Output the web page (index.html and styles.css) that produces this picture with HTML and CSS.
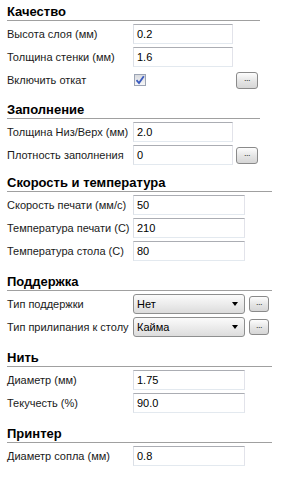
FILE: index.html
```html
<!DOCTYPE html>
<html lang="ru">
<head>
<meta charset="utf-8">
<link rel="stylesheet" href="styles.css">
</head>
<body>
<div class="panel">
  <section class="group narrow first">
    <div class="title">Качество</div>
    <div class="row"><span class="label">Высота слоя (мм)</span><span class="field">0.2</span></div>
    <div class="row"><span class="label">Толщина стенки (мм)</span><span class="field">1.6</span></div>
    <div class="row"><span class="label">Включить откат</span><span class="slot"><span class="check"><svg width="10" height="10" viewBox="0 0 10 10"><path d="M1.5 5.2 L4 8 L8.8 1.2" fill="none" stroke="#3a5bbf" stroke-width="1.8"/></svg></span></span><span class="more">...</span></div>
  </section>
  <section class="group narrow">
    <div class="title">Заполнение</div>
    <div class="row"><span class="label">Толщина Низ/Верх (мм)</span><span class="field">2.0</span></div>
    <div class="row"><span class="label">Плотность заполнения</span><span class="field">0</span><span class="more">...</span></div>
  </section>
  <section class="group wide tight">
    <div class="title">Скорость и температура</div>
    <div class="row"><span class="label">Скорость печати (мм/с)</span><span class="field">50</span></div>
    <div class="row"><span class="label">Температура печати (С)</span><span class="field">210</span></div>
    <div class="row"><span class="label">Температура стола (С)</span><span class="field">80</span></div>
  </section>
  <section class="group wide">
    <div class="title">Поддержка</div>
    <div class="row"><span class="label">Тип поддержки</span><span class="select">Нет<span class="arrow"></span></span><span class="more small">...</span></div>
    <div class="row"><span class="label">Тип прилипания к столу</span><span class="select">Кайма<span class="arrow"></span></span><span class="more small">...</span></div>
  </section>
  <section class="group wide">
    <div class="title">Нить</div>
    <div class="row"><span class="label">Диаметр (мм)</span><span class="field">1.75</span></div>
    <div class="row"><span class="label">Текучесть (%)</span><span class="field">90.0</span></div>
  </section>
  <section class="group wide">
    <div class="title">Принтер</div>
    <div class="row"><span class="label">Диаметр сопла (мм)</span><span class="field">0.8</span></div>
  </section>
</div>
</body>
</html>
```
FILE: styles.css
```css
html, body {
  margin: 0;
  background: #ffffff;
}
.panel {
  padding: 0 0 0 7px;
  font-family: "Liberation Sans", Arial, sans-serif;
  font-size: 11px;
  color: #1a1a1a;
}
.group {
  margin-top: 12px;
}
.group.narrow { width: 253px; margin-top: 11px; }
.group.first { margin-top: 3px; }
.group.tight { margin-top: 9px; }
.group.wide { width: 265px; }
.title {
  font-weight: bold;
  font-size: 13px;
  line-height: 17px;
  height: 17px;
  color: #000;
  border-bottom: 1px solid #a0a0a0;
  margin-bottom: 3px;
}
.row {
  display: flex;
  align-items: center;
  height: 20px;
  margin-top: 3px;
}
.label {
  width: 126px;
  flex: none;
  white-space: nowrap;
}
.field, .slot, .select {
  box-sizing: border-box;
  height: 20px;
  flex: none;
}
.narrow .field, .narrow .slot { width: 100px; }
.wide .field, .wide .select { width: 112px; }
.field {
  border: 1px solid;
  border-color: #abadb3 #e2e3ea #e3e9ef #dbdfe6;
  padding: 0 3px;
  line-height: 18px;
  color: #000;
}
.slot {
  display: flex;
  align-items: center;
  padding-left: 1px;
}
.check {
  box-sizing: border-box;
  width: 12px;
  height: 12px;
  border: 1px solid #9ca4b4;
  background: linear-gradient(#d8dadf, #f7f7f8);
  display: flex;
  align-items: center;
  justify-content: center;
}
.check svg { display: block; }
.more {
  box-sizing: border-box;
  flex: none;
  width: 22px;
  height: 17px;
  margin-left: 3px;
  border: 1px solid #8a8a8a;
  border-radius: 3px;
  background: linear-gradient(#fdfdfd, #e4e4e4 55%, #d6d6d6);
  font-size: 9px;
  line-height: 11px;
  text-align: center;
  color: #333;
  letter-spacing: -0.5px;
}
.more.small {
  width: 20px;
  height: 16px;
  margin-left: 4px;
  line-height: 10px;
}
.select {
  position: relative;
  border: 1px solid #8e8f8f;
  border-radius: 3px;
  background: linear-gradient(#fbfbfb, #ececec 50%, #dcdcdc);
  padding: 0 3px;
  line-height: 18px;
  color: #000;
}
.arrow {
  position: absolute;
  right: 6px;
  top: 7px;
  width: 0;
  height: 0;
  border-left: 3.5px solid transparent;
  border-right: 3.5px solid transparent;
  border-top: 4px solid #000;
}
```
